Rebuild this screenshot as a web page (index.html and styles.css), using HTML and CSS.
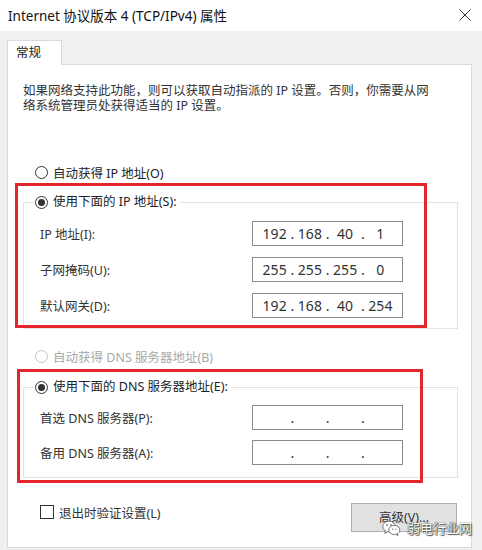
FILE: index.html
```html
<!DOCTYPE html>
<html lang="zh-CN">
<head>
    <meta charset="UTF-8">
    <title>Internet 协议版本 4 (TCP/IPv4) 属性</title>
    <link rel="stylesheet" href="styles.css">
</head>
<body>
    <div class="titlebar">
        <span class="title">Internet 协议版本 4 (TCP/IPv4) 属性</span>
        <svg class="close" width="12" height="12" viewBox="0 0 12 12">
            <path d="M0.5 0.5 L11.5 11.5 M11.5 0.5 L0.5 11.5" stroke="#333" stroke-width="1" fill="none"/>
        </svg>
    </div>

    <div class="tabs">
        <div class="tab">常规</div>
    </div>

    <div class="panel">
        <p class="desc">如果网络支持此功能，则可以获取自动指派的 IP 设置。否则，你需要从网<br>络系统管理员处获得适当的 IP 设置。</p>

        <div class="option first">
            <span class="radio"></span>自动获得 IP 地址(O)
        </div>

        <fieldset class="group">
            <legend><span class="radio on"></span>使用下面的 IP 地址(S):</legend>
            <div class="row">
                <span>IP 地址(I):</span>
                <div class="ipbox"><b>192</b><i>.</i><b>168</b><i>.</i><b>40</b><i>.</i><b>1</b></div>
            </div>
            <div class="row">
                <span>子网掩码(U):</span>
                <div class="ipbox"><b>255</b><i>.</i><b>255</b><i>.</i><b>255</b><i>.</i><b>0</b></div>
            </div>
            <div class="row">
                <span>默认网关(D):</span>
                <div class="ipbox"><b>192</b><i>.</i><b>168</b><i>.</i><b>40</b><i>.</i><b>254</b></div>
            </div>
        </fieldset>

        <div class="option disabled">
            <span class="radio"></span>自动获得 DNS 服务器地址(B)
        </div>

        <fieldset class="group dns">
            <legend><span class="radio on"></span>使用下面的 DNS 服务器地址(E):</legend>
            <div class="row">
                <span>首选 DNS 服务器(P):</span>
                <div class="ipbox"><b></b><i>.</i><b></b><i>.</i><b></b><i>.</i><b></b></div>
            </div>
            <div class="row">
                <span>备用 DNS 服务器(A):</span>
                <div class="ipbox"><b></b><i>.</i><b></b><i>.</i><b></b><i>.</i><b></b></div>
            </div>
        </fieldset>

        <div class="bottom">
            <div class="check"><span class="box"></span>退出时验证设置(L)</div>
            <div class="btn">高级(V)...</div>
        </div>

        <div class="mark mark-ip"></div>
        <div class="mark mark-dns"></div>
    </div>

    <div class="watermark">
        <svg width="19" height="16" viewBox="0 0 19 16">
            <ellipse cx="7" cy="6.5" rx="6.2" ry="5.3" fill="#fff" stroke="#777" stroke-width="1"/>
            <path d="M3.5 10.5 L2.8 13.5 L6 11.6" fill="#fff" stroke="#777" stroke-width="1"/>
            <ellipse cx="12.3" cy="10" rx="5.5" ry="4.6" fill="#fff" stroke="#777" stroke-width="1"/>
            <path d="M15 13.8 L16.2 15.5 L13.6 14.3" fill="#fff" stroke="#777" stroke-width="1"/>
            <circle cx="5" cy="5" r="0.9" fill="#777"/>
            <circle cx="9" cy="5" r="0.9" fill="#777"/>
            <circle cx="10.6" cy="9.3" r="0.7" fill="#777"/>
            <circle cx="14" cy="9.3" r="0.7" fill="#777"/>
        </svg>
        <span>弱电行业网</span>
    </div>
</body>
</html>
```

FILE: styles.css
```css
body {
    margin: 0;
    background: #f0f0f0;
    font-family: "Noto Sans", "Noto Sans CJK SC", sans-serif;
    font-size: 12.5px;
    color: #222;
    position: relative;
}
.titlebar {
    height: 29px;
    background: #fff;
    display: flex;
    align-items: center;
    justify-content: space-between;
    padding: 0 11px 2px 8px;
}
.title {
    font-size: 13.5px;
    color: #111;
}
.tabs {
    display: flex;
    padding: 9px 0 0 7px;
}
.tab {
    width: 45px;
    height: 24px;
    line-height: 24px;
    padding-left: 8px;
    background: #fff;
    border: 1px solid #d9d9d9;
    border-bottom: none;
    margin-bottom: -1px;
    position: relative;
    z-index: 1;
}
.panel {
    position: relative;
    margin-left: 7px;
    width: 463px;
    background: #fff;
    border: 1px solid #d9d9d9;
    padding-bottom: 15px;
}
.desc {
    margin: 18px 0 0 15px;
    line-height: 15px;
    white-space: nowrap;
    color: #333;
}
.option {
    display: flex;
    align-items: center;
    height: 18px;
    margin-left: 27px;
}
.option.first {
    margin-top: 50px;
}
.option.disabled {
    margin-top: 18px;
    color: #a8a8a8;
}
.radio {
    width: 11px;
    height: 11px;
    border: 1px solid #333;
    border-radius: 50%;
    margin-right: 5px;
    display: flex;
    align-items: center;
    justify-content: center;
    flex-shrink: 0;
}
.radio.on::after {
    content: "";
    width: 7px;
    height: 7px;
    border-radius: 50%;
    background: #333;
}
.disabled .radio {
    border-color: #c4c4c4;
}
.group {
    margin: 12px 13px 0 15px;
    padding: 10px 0 10px 0;
    border: 1px solid #e3e3e3;
    display: flex;
    flex-direction: column;
    gap: 11px;
}
.group.dns {
    margin-top: 13px;
    padding-top: 9px;
    padding-bottom: 12px;
    gap: 10px;
}
.group legend {
    margin-left: 10px;
    padding: 0 3px 0 1px;
    height: 18px;
    line-height: 18px;
    display: flex;
    align-items: center;
}
.row {
    display: grid;
    grid-template-columns: 212px 151px;
    align-items: center;
    padding-left: 16px;
    color: #333;
}
.ipbox {
    height: 25px;
    box-sizing: border-box;
    border: 1px solid #8a8a8a;
    padding: 0 4px;
    display: flex;
    align-items: center;
    font-size: 14px;
    color: #333;
}
.ipbox b {
    font-weight: normal;
    flex: 1;
    text-align: center;
}
.ipbox i {
    font-style: normal;
    width: 0;
    display: flex;
    justify-content: center;
}
.bottom {
    display: flex;
    justify-content: space-between;
    align-items: flex-start;
    margin: 25px 14px 0 32px;
}
.check {
    display: flex;
    align-items: center;
    height: 18px;
    color: #333;
}
.check .box {
    width: 12px;
    height: 12px;
    border: 1px solid #333;
    margin-right: 5px;
}
.btn {
    width: 104px;
    height: 27px;
    line-height: 27px;
    text-align: center;
    background: #e1e1e1;
    border: 1px solid #adadad;
    color: #333;
}
.mark {
    position: absolute;
    border: 3px solid #e3262c;
    box-sizing: border-box;
}
.mark-ip {
    left: 7px;
    top: 118px;
    width: 412px;
    height: 145px;
}
.mark-dns {
    left: 9px;
    top: 304px;
    width: 406px;
    height: 114px;
}
.watermark {
    position: absolute;
    left: 382px;
    top: 518px;
    display: flex;
    align-items: center;
    gap: 6px;
}
.watermark span {
    font-size: 13px;
    color: #fff;
    text-shadow: 0 0 1px #333, 0 0 1px #333, 1px 1px 1px #555;
}
```
